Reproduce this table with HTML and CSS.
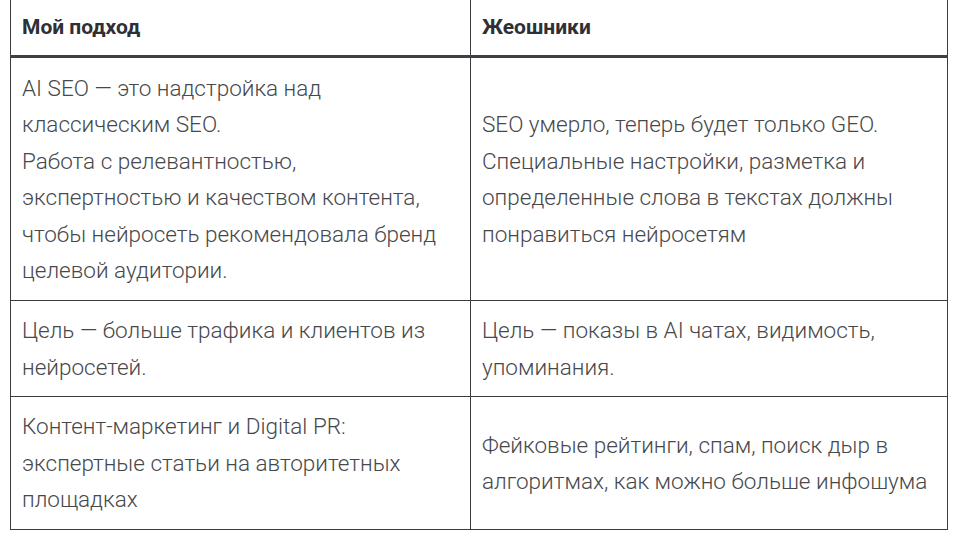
FILE: index.html
```html
<!DOCTYPE html>
<html lang="ru">
<head>
<meta charset="utf-8">
<link rel="stylesheet" href="styles.css">
</head>
<body>
<div class="wrap">
<table class="cmp">
<colgroup><col class="c1"><col class="c2"></colgroup>
<thead>
<tr><th>Мой подход</th><th>Жеошники</th></tr>
</thead>
<tbody>
<tr class="r1">
<td>AI SEO — это надстройка над классическим SEO.<br>Работа с релевантностью, экспертностью и качеством контента, чтобы нейросеть рекомендовала бренд целевой аудитории.</td>
<td>SEO умерло, теперь будет только GEO.<br>Специальные настройки, разметка и определенные слова в текстах должны понравиться нейросетям</td>
</tr>
<tr class="r2">
<td>Цель — больше трафика и клиентов из нейросетей.</td>
<td>Цель — показы в AI чатах, видимость, упоминания.</td>
</tr>
<tr class="r3">
<td>Контент-маркетинг и Digital PR: экспертные статьи на авторитетных площадках</td>
<td>Фейковые рейтинги, спам, поиск дыр в алгоритмах, как можно больше инфошума</td>
</tr>
</tbody>
</table>
</div>
</body>
</html>
```
FILE: styles.css
```css
html, body {
  margin: 0;
  padding: 0;
  background: #ffffff;
}
.wrap {
  padding: 0 11px 0 10px;
}
.cmp {
  width: 937px;
  border-collapse: collapse;
  table-layout: fixed;
  font-family: Roboto, "Liberation Sans", sans-serif;
}
.c1 { width: 460px; }
.c2 { width: 477px; }
.cmp th {
  text-align: left;
  font-weight: 700;
  font-size: 21px;
  color: #2e3036;
  height: 56px;
  padding: 0 11px;
  border-left: 1px solid #3a3c40;
  border-right: 1px solid #3a3c40;
  border-bottom: 3px solid #3d4046;
  vertical-align: middle;
  box-sizing: border-box;
}
.cmp td {
  font-weight: 300;
  font-size: 22.5px;
  line-height: 36.6px;
  color: #46484b;
  padding: 11px;
  border: 1px solid #3a3c40;
  vertical-align: middle;
}
.r1 td {
  padding-top: 12px;
}
```
